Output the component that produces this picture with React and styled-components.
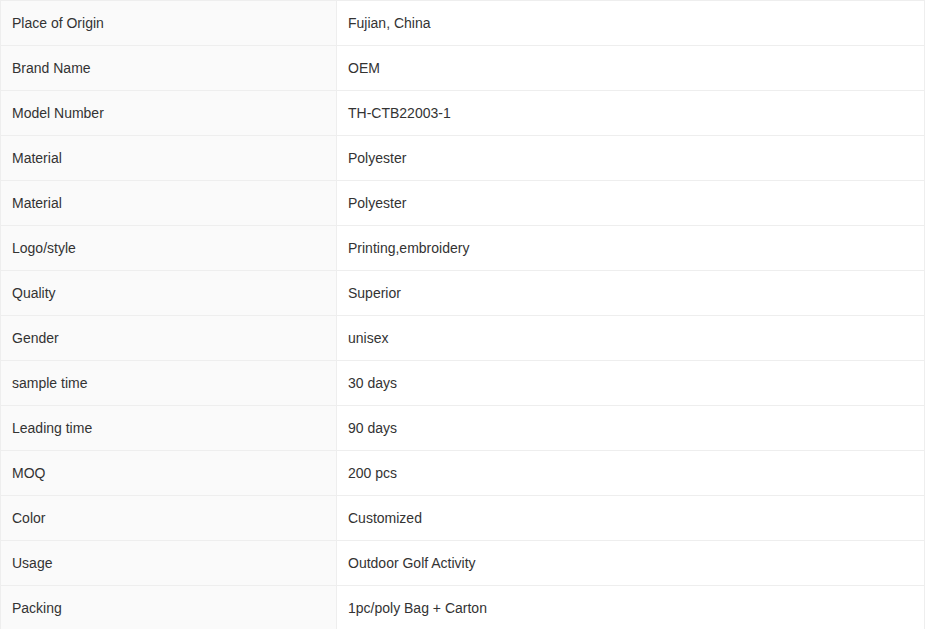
import React from "react";
import styled, { createGlobalStyle } from "styled-components";

const Global = createGlobalStyle`
  html, body { margin: 0; padding: 0; background: #ffffff; }
  body { font-family: "Liberation Sans", Arial, sans-serif; }
`;

const Table = styled.table`
  width: 925px;
  border-collapse: collapse;
  table-layout: fixed;
  font-family: "Liberation Sans", Arial, sans-serif;
  font-size: 14px;
  color: #333333;
`;

const Row = styled.tr`
  height: 45px;
`;

const Cell = styled.td`
  border: 1px solid #eeeeee;
  padding: 0 11px;
  height: 44px;
  vertical-align: middle;
  line-height: 20px;
  background: ${(p) => (p.$label ? "#fafafa" : "#ffffff")};
  width: ${(p) => (p.$label ? "335px" : "auto")};
  box-sizing: border-box;
`;

const rows = [
  ["Place of Origin", "Fujian, China"],
  ["Brand Name", "OEM"],
  ["Model Number", "TH-CTB22003-1"],
  ["Material", "Polyester"],
  ["Material", "Polyester"],
  ["Logo/style", "Printing,embroidery"],
  ["Quality", "Superior"],
  ["Gender", "unisex"],
  ["sample time", "30 days"],
  ["Leading time", "90 days"],
  ["MOQ", "200 pcs"],
  ["Color", "Customized"],
  ["Usage", "Outdoor Golf Activity"],
  ["Packing", "1pc/poly Bag + Carton"],
];

export default function App() {
  return (
    <>
      <Global />
      <Table>
        <colgroup>
          <col style={{ width: 336 }} />
          <col />
        </colgroup>
        <tbody>
          {rows.map(([k, v], i) => (
            <Row key={i}>
              <Cell $label>{k}</Cell>
              <Cell>{v}</Cell>
            </Row>
          ))}
        </tbody>
      </Table>
    </>
  );
}
